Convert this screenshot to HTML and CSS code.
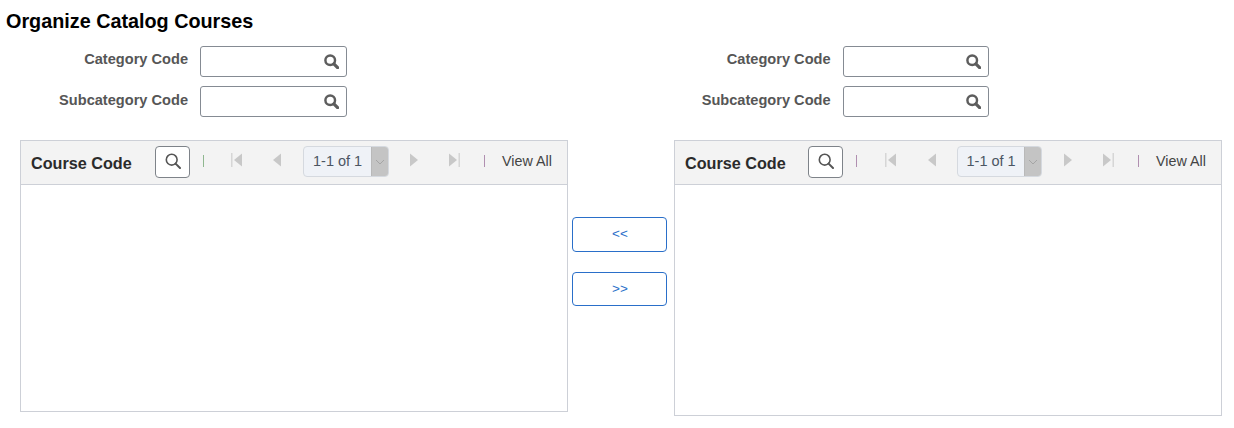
FILE: index.html
```html
<!DOCTYPE html>
<html lang="en">
<head>
<meta charset="utf-8">
<title>Organize Catalog Courses</title>
<link rel="stylesheet" href="styles.css">
</head>
<body>
<svg class="defs" width="0" height="0" aria-hidden="true">
  <symbol id="lookup" viewBox="0 0 14 14"><circle cx="5.800" cy="5.800" r="4.500" fill="none" stroke="currentColor" stroke-width="2.300"/><path d="M9.200 9.200l3.500 3.500" fill="none" stroke="currentColor" stroke-width="3" stroke-linecap="round"/></symbol>
  <symbol id="find" viewBox="0 0 16 16"><circle cx="6.700" cy="6.700" r="5.400" fill="none" stroke="currentColor" stroke-width="1.600"/><path d="M10.600 10.600l4.400 4.400" fill="none" stroke="currentColor" stroke-width="2" stroke-linecap="round"/></symbol>
  <symbol id="first" viewBox="0 0 11 14"><path d="M0 0h1.500v14H0z" fill="#d6d6d6"/><path d="M11 .5v13L3 7z" fill="#c8c8c8"/></symbol>
  <symbol id="prev" viewBox="0 0 8 14"><path d="M8 .5v13L0 7z" fill="#c8c8c8"/></symbol>
  <symbol id="next" viewBox="0 0 8 14"><path d="M0 .5v13L8 7z" fill="#c8c8c8"/></symbol>
  <symbol id="last" viewBox="0 0 11 14"><path d="M0 .5v13L8 7z" fill="#c8c8c8"/><path d="M9.500 0H11v14H9.500z" fill="#d6d6d6"/></symbol>
</svg>
<h1 class="title">Organize Catalog Courses</h1>
<div class="filters">
  <div class="filter-group">
    <div class="filter-row"><span class="filter-label">Category Code</span><span class="lookup-input"><svg class="lookup-icon"><use href="#lookup"/></svg></span></div>
    <div class="filter-row"><span class="filter-label">Subcategory Code</span><span class="lookup-input"><svg class="lookup-icon"><use href="#lookup"/></svg></span></div>
  </div>
  <div class="filter-group">
    <div class="filter-row"><span class="filter-label">Category Code</span><span class="lookup-input"><svg class="lookup-icon"><use href="#lookup"/></svg></span></div>
    <div class="filter-row"><span class="filter-label">Subcategory Code</span><span class="lookup-input"><svg class="lookup-icon"><use href="#lookup"/></svg></span></div>
  </div>
</div>
<div class="workspace">
  <section class="grid-box grid-left">
    <header class="grid-head">
      <span class="grid-title">Course Code</span>
      <button class="find-btn" type="button" aria-label="Find"><svg class="find-icon"><use href="#find"/></svg></button>
      <i class="sep sep-green"></i>
      <svg class="nav nav-first"><use href="#first"/></svg>
      <svg class="nav nav-prev"><use href="#prev"/></svg>
      <span class="pager"><span class="pager-text">1-1 of 1</span><span class="pager-arrow"><svg class="chev" viewBox="0 0 10 6"><path d="M1 1l4 4 4-4" fill="none" stroke="#a5a5a5"/></svg></span></span>
      <svg class="nav nav-next"><use href="#next"/></svg>
      <svg class="nav nav-last"><use href="#last"/></svg>
      <i class="sep sep-purple sep-end"></i>
      <span class="view-all">View All</span>
    </header>
  </section>
  <div class="move-col">
    <button class="move-btn" type="button">&lt;&lt;</button>
    <button class="move-btn move-btn-second" type="button">&gt;&gt;</button>
  </div>
  <section class="grid-box grid-right">
    <header class="grid-head">
      <span class="grid-title">Course Code</span>
      <button class="find-btn" type="button" aria-label="Find"><svg class="find-icon"><use href="#find"/></svg></button>
      <i class="sep sep-purple"></i>
      <svg class="nav nav-first"><use href="#first"/></svg>
      <svg class="nav nav-prev"><use href="#prev"/></svg>
      <span class="pager"><span class="pager-text">1-1 of 1</span><span class="pager-arrow"><svg class="chev" viewBox="0 0 10 6"><path d="M1 1l4 4 4-4" fill="none" stroke="#a5a5a5"/></svg></span></span>
      <svg class="nav nav-next"><use href="#next"/></svg>
      <svg class="nav nav-last"><use href="#last"/></svg>
      <i class="sep sep-purple sep-end"></i>
      <span class="view-all">View All</span>
    </header>
  </section>
</div>
</body>
</html>
```
FILE: styles.css
```css
* { box-sizing: border-box; }
html, body { margin: 0; padding: 0; background: #fff; }
body { font-family: "Liberation Sans", Arial, sans-serif; color: #333; height: 428px; overflow: hidden; }
.defs { display: block; height: 0; }
.title { margin: 0; padding: 11px 0 0 6px; height: 46px; font-size: 19.8px; line-height: 21px; font-weight: 700; color: #000; }
.filters { display: flex; }
.filter-group { flex: none; width: 642.6px; display: flex; flex-direction: column; gap: 9px; }
.filter-row { display: flex; align-items: flex-start; }
.filter-label { width: 188px; text-align: right; font-size: 14.6px; line-height: 16px; padding-top: 5px; font-weight: 700; color: #565656; }
.filter-row + .filter-row .filter-label { padding-top: 6px; }
.lookup-input { margin-left: 12px; width: 146.5px; height: 31px; border: 1px solid #858b93; border-radius: 3px; background: #fff; display: flex; justify-content: flex-end; align-items: center; padding-right: 7px; }
.lookup-icon { width: 15px; height: 15px; color: #5d5d5d; }
.workspace { display: flex; align-items: flex-start; padding: 23px 0 0 20px; }
.grid-box { width: 548px; border: 1px solid #cdd0d7; background: #fff; }
.grid-left { height: 272px; }
.grid-right { height: 276px; margin-left: 7px; }
.grid-head { display: flex; align-items: flex-start; height: 44px; background: #f3f3f3; border-bottom: 1px solid #cdd0d7; }
.grid-title { margin: 13px 0 0 10px; width: 124px; font-size: 16.2px; line-height: 18px; font-weight: 700; color: #2b2b2b; }
.find-btn { margin: 5px 0 0 0; width: 35px; height: 32px; padding: 0; border: 1px solid #7e8389; border-radius: 4px; background: #fff; display: flex; align-items: center; justify-content: center; }
.find-icon { width: 16px; height: 16px; color: #555; margin-top: -3px; }
.sep { display: block; width: 1px; height: 12px; margin-top: 14px; }
.sep-green { background: #8fb78f; margin-left: 13px; }
.sep-purple { background: #b08fb0; margin-left: 13px; }
.sep-end { margin-left: 24px; }
.nav { display: block; height: 14px; margin-top: 12px; }
.nav-first { width: 11px; margin-left: 27px; }
.nav-prev { width: 8px; margin-left: 31px; }
.nav-next { width: 8px; margin-left: 21px; }
.nav-last { width: 11px; margin-left: 31px; }
.pager { margin: 5px 0 0 22px; width: 86px; height: 31px; display: flex; border: 1px solid #d5d9df; border-radius: 4px; background: #eff2f7; overflow: hidden; }
.pager-text { width: 68px; font-size: 14.5px; line-height: 29px; text-align: center; color: #4b5563; }
.pager-arrow { width: 17px; background: #c4c4c4; border-left: 1px solid #b9b9b9; display: flex; align-items: center; justify-content: center; }
.chev { width: 10px; height: 6px; }
.view-all { margin: 12px 0 0 17px; font-size: 14.3px; line-height: 17px; color: #444; }
.grid-right .grid-title { width: 123px; }
.grid-right .nav-first { margin-left: 28px; }
.grid-right .nav-prev { margin-left: 32px; }
.grid-right .pager { width: 85px; margin-left: 21px; }
.grid-right .pager-text { width: 67px; }
.grid-right .nav-next { margin-left: 22px; }
.move-col { width: 95px; margin-left: 4px; padding-top: 77px; display: flex; flex-direction: column; }
.move-btn { height: 35px; width: 95px; padding: 0 0 3px 1px; border: 1px solid #2a6fc9; border-radius: 4px; background: #fff; color: #2a6fc9; font-family: inherit; font-size: 13.5px; line-height: 15px; }
.move-btn-second { margin-top: 20px; height: 34px; padding: 0 0 1px 1px; }
```
